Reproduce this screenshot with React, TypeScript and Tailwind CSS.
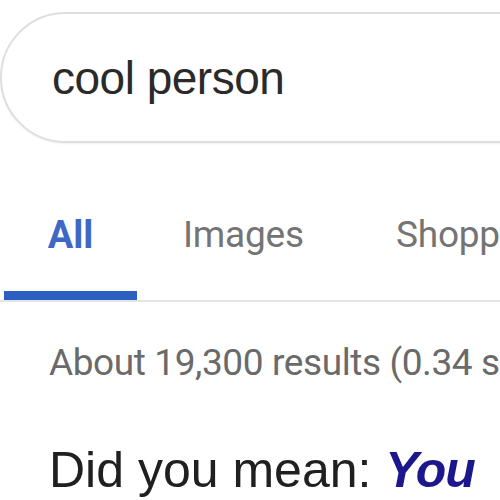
export default function App() {
  const tabs = [
    { label: "All", active: true },
    { label: "Images", active: false },
    { label: "Shopping", active: false },
  ];

  return (
    <div className="h-[500px] w-[500px] overflow-hidden bg-white">
      {/* search box */}
      <div className="pt-[12px]">
        <div className="flex h-[131px] w-[620px] items-center rounded-full border-2 border-[#dedede] pl-[50px] shadow-[0_1px_2px_rgba(0,0,0,0.06)]">
          <span className="font-['Liberation_Sans',Arial,sans-serif] text-[46px] leading-none tracking-[-0.5px] text-[#2a2a2a]">
            cool person
          </span>
        </div>
      </div>

      {/* tabs */}
      <div className="mt-[70px] flex w-[640px] border-b-2 border-[#e4e4e4] pl-[4px]">
        {tabs.map((tab) => (
          <div
            key={tab.label}
            className={`flex shrink-0 flex-col items-center ${tab.active ? "w-[133px]" : "px-[46px]"}`}
          >
            <span
              className={`whitespace-nowrap font-['Roboto',sans-serif] leading-[44px] ${
                tab.active
                  ? "text-[38px] font-bold text-[#3d68c6]"
                  : "text-[37px] tracking-[-0.2px] text-[#747474]"
              }`}
            >
              {tab.label}
            </span>
            <div
              className={`mt-[34px] h-[9px] w-full ${tab.active ? "bg-[#2b5fc1]" : "bg-transparent"}`}
            />
          </div>
        ))}
      </div>

      {/* results */}
      <div className="pl-[49px]">
        <p className="mt-[40px] whitespace-nowrap font-['Roboto',sans-serif] text-[37px] leading-[42px] tracking-[-0.4px] text-[#6a6a6a]">
          About 19,300 results (0.34 seconds)
        </p>
        <p className="mt-[58px] whitespace-nowrap font-['Liberation_Sans',Arial,sans-serif] text-[50px] leading-[56px] text-[#202020]">
          Did you mean:{" "}
          <span className="font-bold italic tracking-[-1px] text-[#1c178c]">You</span>
        </p>
      </div>
    </div>
  );
}
